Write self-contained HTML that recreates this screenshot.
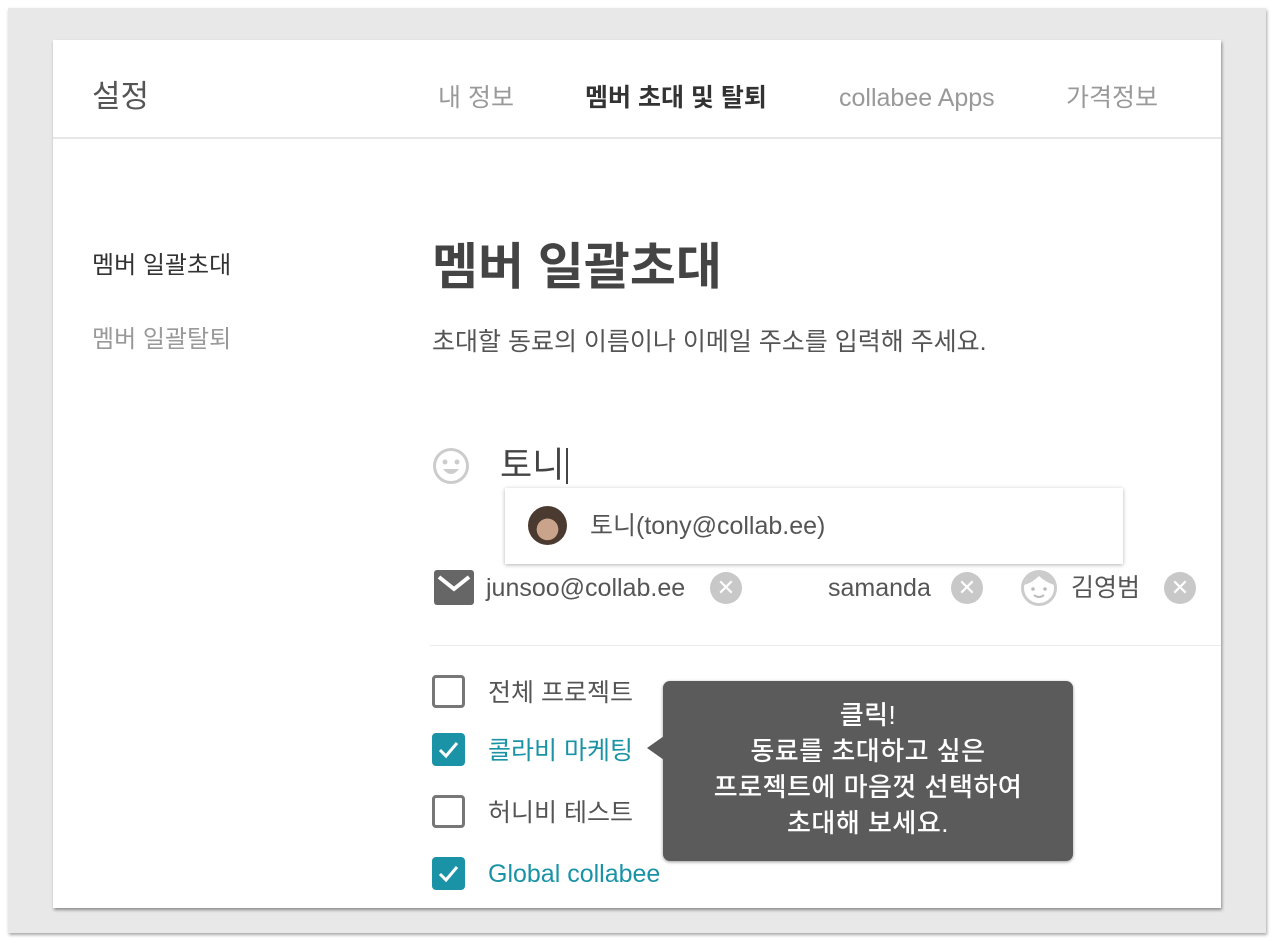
<!DOCTYPE html>
<html><head><meta charset="utf-8"><style>
*{margin:0;padding:0;box-sizing:border-box}
body{width:1280px;height:947px;background:#fff;position:relative;overflow:hidden;font-family:"Liberation Sans","Noto Sans CJK KR",sans-serif;color:#444}
.a{position:absolute;white-space:nowrap;line-height:1.2}
#frame{left:8px;top:8px;width:1258px;height:925px;background:#e8e8e8;box-shadow:1px 2px 3px rgba(0,0,0,.35)}
#card{left:53px;top:40px;width:1168px;height:868px;background:#fff;box-shadow:1px 2px 3px rgba(0,0,0,.4)}
.cb{position:absolute;width:33px;height:33px;border:3px solid #777;border-radius:4px;background:#fff}
.cb.on{background:#1a93a6;border-color:#1a93a6}
.x{position:absolute;width:32px;height:32px;border-radius:50%;background:#c8c8c8;color:#fff;font-size:22px;line-height:32px;text-align:center}
</style></head><body>
<div class="a" id="frame"></div>
<div class="a" id="card"></div>
<div class="a" style="left:53px;top:137px;width:1168px;height:2px;background:#e6e6e6"></div>
<div class="a" style="left:92px;top:78px;font-size:31px;color:#555">설정</div>
<div class="a" style="left:438px;top:83px;font-size:25px;color:#999">내 정보</div>
<div class="a" style="left:585px;top:83px;font-size:25px;color:#333;font-weight:bold">멤버 초대 및 탈퇴</div>
<div class="a" style="left:839px;top:83px;font-size:25px;color:#999">collabee Apps</div>
<div class="a" style="left:1066px;top:83px;font-size:25px;color:#999">가격정보</div>
<div class="a" style="left:92px;top:252px;font-size:24px;color:#333">멤버 일괄초대</div>
<div class="a" style="left:92px;top:326px;font-size:24px;color:#999">멤버 일괄탈퇴</div>
<div class="a" style="left:432px;top:237px;font-size:50px;color:#444;font-weight:bold">멤버 일괄초대</div>
<div class="a" style="left:432px;top:327px;font-size:25px;color:#555">초대할 동료의 이름이나 이메일 주소를 입력해 주세요.</div>
<svg class="a" style="left:432px;top:447px" width="38" height="38" viewBox="0 0 38 38"><circle cx="19" cy="19" r="16.5" fill="none" stroke="#ccc" stroke-width="3"/><circle cx="13" cy="15" r="2.5" fill="#ccc"/><circle cx="25" cy="15" r="2.5" fill="#ccc"/><path d="M11 22 Q19 32 27 22Z" fill="#ccc"/></svg>
<div class="a" style="left:500px;top:445px;font-size:35px;color:#444">토니</div>
<div class="a" style="left:566px;top:448px;width:2px;height:36px;background:#444"></div>
<div class="a" style="left:505px;top:488px;width:618px;height:76px;background:#fff;box-shadow:0 1px 4px rgba(0,0,0,.3)"></div>
<div class="a" style="left:528px;top:506px;width:39px;height:39px;border-radius:50%;background:radial-gradient(circle at 50% 60%,#c9a38a 0 35%,#4a3a30 36%)"></div>
<div class="a" style="left:590px;top:511px;font-size:25px;color:#555">토니(tony@collab.ee)</div>
<svg class="a" style="left:434px;top:570px" width="40" height="35" viewBox="0 0 40 35"><rect width="40" height="35" rx="3" fill="#666"/><path d="M5 7 L20 19 L35 7" fill="none" stroke="#fff" stroke-width="4"/></svg>
<div class="a" style="left:486px;top:573px;font-size:25px;color:#555">junsoo@collab.ee</div>
<div class="x" style="left:710px;top:572px">✕</div>
<div class="a" style="left:828px;top:573px;font-size:25px;color:#555">samanda</div>
<div class="x" style="left:951px;top:572px">✕</div>
<svg class="a" style="left:1020px;top:567px" width="38" height="40" viewBox="0 0 38 40"><circle cx="19" cy="21" r="16.5" fill="#fff" stroke="#ccc" stroke-width="3"/><path d="M4 18 Q10 4 19 5 Q30 5 34 18 Q24 14 19 9 Q12 16 4 18Z" fill="#ccc"/><circle cx="13" cy="22" r="1.8" fill="#bbb"/><circle cx="25" cy="22" r="1.8" fill="#bbb"/><path d="M14 28 Q19 32 24 28" fill="none" stroke="#bbb" stroke-width="2"/></svg>
<div class="a" style="left:1071px;top:573px;font-size:25px;color:#555">김영범</div>
<div class="x" style="left:1164px;top:572px">✕</div>
<div class="a" style="left:430px;top:645px;width:791px;height:1px;background:#ececec"></div>
<div class="cb" style="left:432px;top:675px"></div>
<div class="a" style="left:488px;top:678px;font-size:25px;color:#555">전체 프로젝트</div>
<div class="cb on" style="left:432px;top:733px"><svg width="27" height="27" viewBox="0 0 27 27"><path d="M5 14 L11 20 L22 7" fill="none" stroke="#fff" stroke-width="3"/></svg></div>
<div class="a" style="left:488px;top:736px;font-size:25px;color:#1a93a6">콜라비 마케팅</div>
<div class="cb" style="left:432px;top:795px"></div>
<div class="a" style="left:488px;top:798px;font-size:25px;color:#555">허니비 테스트</div>
<div class="cb on" style="left:432px;top:857px"><svg width="27" height="27" viewBox="0 0 27 27"><path d="M5 14 L11 20 L22 7" fill="none" stroke="#fff" stroke-width="3"/></svg></div>
<div class="a" style="left:488px;top:859px;font-size:25px;color:#1a93a6">Global collabee</div>
<div class="a" style="left:663px;top:681px;width:410px;height:180px;background:#5b5b5b;border-radius:7px;box-shadow:0 1px 3px rgba(0,0,0,.4)"></div>
<div class="a" style="left:647px;top:736px;width:0;height:0;border-top:12px solid transparent;border-bottom:12px solid transparent;border-right:17px solid #5b5b5b"></div>
<div class="a" style="left:663px;top:697px;width:410px;text-align:center;font-size:26px;line-height:36px;letter-spacing:.5px;color:#fff;white-space:normal;font-weight:500">클릭!<br>동료를 초대하고 싶은<br>프로젝트에 마음껏 선택하여<br>초대해 보세요.</div>
</body></html>
